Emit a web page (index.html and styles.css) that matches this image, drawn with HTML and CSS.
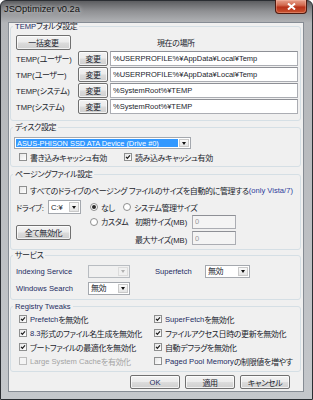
FILE: index.html
```html
<!DOCTYPE html>
<html lang="ja">
  <head>
    <meta charset="utf-8">
    <title>JSOptimizer v0.2a</title>
    <link rel="stylesheet" href="styles.css">
  </head>
  <body>
    <div class="window">
      <div class="titlebar">
        <span class="title">JSOptimizer v0.2a</span>
        <span class="close">
          <svg viewBox="0 0 9 7" width="9" height="7"><path d="M1 0.5 L8 6.5 M8 0.5 L1 6.5"/></svg>
        </span>
      </div>
      <div class="frame">
        <div class="client">

          <fieldset class="group temp">
            <legend><span class="latin">TEMP</span>フォルダ設定</legend>
            <div class="temp-head">
              <button class="btn wide">一括変更</button>
              <span class="now">現在の場所</span>
            </div>
            <div class="temp-row">
              <span class="tlabel"><span class="latin">TEMP(</span>ユーザー<span class="latin">)</span></span>
              <button class="btn small">変更</button>
              <input class="field" value="%USERPROFILE%¥AppData¥Local¥Temp">
            </div>
            <div class="temp-row">
              <span class="tlabel"><span class="latin">TMP(</span>ユーザー<span class="latin">)</span></span>
              <button class="btn small">変更</button>
              <input class="field" value="%USERPROFILE%¥AppData¥Local¥Temp">
            </div>
            <div class="temp-row">
              <span class="tlabel"><span class="latin">TEMP(</span>システム<span class="latin">)</span></span>
              <button class="btn small">変更</button>
              <input class="field" value="%SystemRoot%¥TEMP">
            </div>
            <div class="temp-row">
              <span class="tlabel"><span class="latin">TMP(</span>システム<span class="latin">)</span></span>
              <button class="btn small">変更</button>
              <input class="field" value="%SystemRoot%¥TEMP">
            </div>
          </fieldset>

          <fieldset class="group disk">
            <legend>ディスク設定</legend>
            <div class="combo drive-list">
              <span class="value selected">ASUS-PHISON SSD ATA Device (Drive #0)</span>
              <span class="arrow"></span>
            </div>
            <div class="disk-checks">
              <label class="check first"><span class="cb"></span>書き込みキャッシュ有効</label>
              <label class="check"><span class="cb"><svg viewBox="0 0 7 7"><path d="M1.2 3.3 L2.8 5 L5.8 1.6"/></svg></span>読み込みキャッシュ有効</label>
            </div>
          </fieldset>

          <fieldset class="group paging">
            <legend>ページングファイル設定</legend>
            <label class="check auto"><span class="cb"></span>すべてのドライブのページング ファイルのサイズを自動的に管理する<span class="latin note">(only Vista/7)</span></label>
            <div class="paging-body">
              <div class="paging-left">
                <div class="drive-row">
                  <span class="drive-label">ドライブ:</span>
                  <div class="combo drive-pick">
                    <span class="value latin">C:¥</span>
                    <span class="arrow"></span>
                  </div>
                </div>
                <button class="btn wide off-all">全て無効化</button>
              </div>
              <div class="paging-right">
                <div class="size-row">
                  <label class="radio none"><span class="rb on"></span>なし</label>
                  <label class="radio"><span class="rb"></span>システム管理サイズ</label>
                </div>
                <div class="size-row">
                  <label class="radio custom"><span class="rb"></span>カスタム</label>
                  <span class="size-label">初期サイズ<span class="latin">(MB)</span></span>
                  <input class="field size" value="0" disabled>
                </div>
                <div class="size-row max">
                  <span class="size-label">最大サイズ<span class="latin">(MB)</span></span>
                  <input class="field size" value="0" disabled>
                </div>
              </div>
            </div>
          </fieldset>

          <fieldset class="group services">
            <legend>サービス</legend>
            <div class="svc-grid">
              <span class="latin">Indexing Service</span>
              <div class="combo svc disabled"><span class="value"></span><span class="arrow"></span></div>
              <span class="latin svc-right">Superfetch</span>
              <div class="combo svc"><span class="value">無効</span><span class="arrow"></span></div>
              <span class="latin">Windows Search</span>
              <div class="combo svc"><span class="value">無効</span><span class="arrow"></span></div>
            </div>
          </fieldset>

          <fieldset class="group tweaks">
            <legend class="latin">Registry Tweaks</legend>
            <div class="tweak-grid">
              <label class="check"><span class="cb"><svg viewBox="0 0 7 7"><path d="M1.2 3.3 L2.8 5 L5.8 1.6"/></svg></span><span class="latin">Prefetch</span>を無効化</label>
              <label class="check"><span class="cb"><svg viewBox="0 0 7 7"><path d="M1.2 3.3 L2.8 5 L5.8 1.6"/></svg></span><span class="latin">SuperFetch</span>を無効化</label>
              <label class="check"><span class="cb"><svg viewBox="0 0 7 7"><path d="M1.2 3.3 L2.8 5 L5.8 1.6"/></svg></span><span class="latin">8.3</span>形式のファイル名生成を無効化</label>
              <label class="check"><span class="cb"><svg viewBox="0 0 7 7"><path d="M1.2 3.3 L2.8 5 L5.8 1.6"/></svg></span>ファイルアクセス日時の更新を無効化</label>
              <label class="check"><span class="cb"><svg viewBox="0 0 7 7"><path d="M1.2 3.3 L2.8 5 L5.8 1.6"/></svg></span>ブートファイルの最適化を無効化</label>
              <label class="check"><span class="cb"><svg viewBox="0 0 7 7"><path d="M1.2 3.3 L2.8 5 L5.8 1.6"/></svg></span>自動デフラグを無効化</label>
              <label class="check disabled"><span class="cb"></span><span class="latin">Large System Cache</span>を有効化</label>
              <label class="check"><span class="cb"></span><span class="latin">Paged Pool Memory</span>の制限値を増やす</label>
            </div>
          </fieldset>

          <div class="actions">
            <button class="btn action"><span class="latin">OK</span></button>
            <button class="btn action">適用</button>
            <button class="btn action">キャンセル</button>
          </div>

        </div>
      </div>
    </div>
  </body>
</html>
```

FILE: styles.css
```css
* {
  box-sizing: border-box;
  margin: 0;
  padding: 0;
}
body {
  width: 313px;
  height: 400px;
  overflow: hidden;
  background: #fff;
  font-family: "Liberation Sans", "Noto Sans CJK JP", sans-serif;
  font-size: 8px;
  letter-spacing: -0.4px;
  font-feature-settings: "palt";
  color: #1a1d2c;
}
.latin {
  font-size: 7.6px;
  letter-spacing: 0;
  color: #232c62;
}

/* window chrome */
.window {
  width: 313px;
  height: 400px;
  display: flex;
  flex-direction: column;
  border: 1px solid #2b2e33;
  border-radius: 6px 6px 0 0;
  background: linear-gradient(#5c5d60 0px, #8f9093 10px, #b3b5b8 22px, #c4c7cb 100%);
}
.titlebar {
  height: 21px;
  display: flex;
  justify-content: space-between;
  align-items: flex-start;
  padding-left: 3px;
}
.title {
  line-height: 17px;
  font-size: 9.3px;
  letter-spacing: 0;
  color: #111;
  text-shadow: 0 0 4px rgba(255, 255, 255, 0.8);
}
.close {
  width: 32px;
  height: 14px;
  margin-right: 5px;
  margin-top: -1px;
  display: flex;
  align-items: center;
  justify-content: center;
  border: 1px solid #4d1a10;
  border-top: 0;
  border-radius: 0 0 4px 4px;
  background: linear-gradient(#e7a08c 0%, #d26a4f 40%, #b8321a 55%, #c9532f 100%);
  box-shadow: inset 0 0 0 1px rgba(255, 200, 180, 0.35);
}
.close svg path {
  stroke: #fff;
  stroke-width: 2;
  fill: none;
}
.frame {
  flex: 1;
  padding: 0 8px 7px 7px;
}
.client {
  height: 100%;
  background: #f0f0f0;
  border: 1px solid #868c94;
  padding: 0 2px 0 1px;
}

/* group boxes */
.group {
  border: 1px solid #d5dfe5;
  border-radius: 3px;
  padding: 0 2px 0 5px;
  margin-top: 2px;
  min-width: 0;
}
.group legend {
  line-height: 9px;
  padding: 0 2px;
  margin-left: -3px;
}
.temp {
  margin-top: -1px;
  padding-bottom: 6px;
}

/* controls */
.btn {
  font: inherit;
  letter-spacing: inherit;
  color: inherit;
  height: 15px;
  border: 1px solid #707070;
  border-radius: 2px;
  background: linear-gradient(#f3f3f3 0%, #ebebeb 48%, #dcdcdc 52%, #cfcfcf 100%);
  box-shadow: inset 0 0 0 1px rgba(255, 255, 255, 0.7);
}
.btn.wide {
  width: 55px;
}
.btn.small {
  width: 30px;
}
.field {
  font: inherit;
  font-size: 7.5px;
  letter-spacing: 0;
  color: inherit;
  height: 15px;
  border: 1px solid #abadb3;
  border-top-color: #8e9096;
  background: #fff;
  padding: 0 2px;
}
.field:disabled {
  background: #f4f4f4;
  color: #9a9a9a;
}
.combo {
  display: flex;
  align-items: stretch;
  border: 1px solid #a4a8ae;
  background: #fff;
  padding: 1px;
}
.combo .value {
  flex: 1;
  padding-left: 1px;
  line-height: 10px;
  white-space: nowrap;
  overflow: hidden;
}
.combo .value.selected {
  background: #3399ff;
  color: #fff;
  font-size: 7.4px;
  letter-spacing: 0;
}
.combo .arrow {
  width: 10px;
  margin-left: 1px;
  display: flex;
  align-items: center;
  justify-content: center;
  border: 1px solid #c9c9c9;
  background: linear-gradient(#fafafa, #e4e4e4);
}
.combo .arrow::after {
  content: "";
  border-left: 2.5px solid transparent;
  border-right: 2.5px solid transparent;
  border-top: 3px solid #111;
}
.combo.disabled {
  background: #f0f0f0;
  border-color: #b8bcc1;
}
.combo.disabled .arrow {
  border-color: #dcdcdc;
  background: #f0f0f0;
}
.combo.disabled .arrow::after {
  border-top-color: #b0b0b0;
}
.check,
.radio {
  display: flex;
  align-items: center;
  white-space: nowrap;
}
.cb {
  width: 8px;
  height: 8px;
  margin-right: 3px;
  flex: none;
  border: 1px solid #8e8f8f;
  background: linear-gradient(135deg, #e6e6e6, #fff);
  display: flex;
}
.cb svg {
  width: 6px;
  height: 6px;
}
.cb svg path {
  stroke: #1c1c1c;
  stroke-width: 1.4;
  fill: none;
}
.check.disabled,
.check.disabled .latin {
  color: #a3a3a3;
}
.check.disabled .cb {
  border-color: #bcbcbc;
  background: #f4f4f4;
}
.rb {
  width: 8px;
  height: 8px;
  margin-right: 3px;
  flex: none;
  border: 1px solid #8e8f8f;
  border-radius: 50%;
  background: #fff;
  display: flex;
  align-items: center;
  justify-content: center;
}
.rb.on::after {
  content: "";
  width: 4px;
  height: 4px;
  border-radius: 50%;
  background: #2a2a2a;
}

/* TEMP folder */
.temp-head {
  display: flex;
  align-items: center;
  margin-top: 4px;
}
.now {
  margin-left: 86px;
}
.temp-row {
  display: flex;
  align-items: center;
  margin-top: 1px;
}
.tlabel {
  width: 62px;
  white-space: nowrap;
}
.tlabel .latin {
  color: inherit;
}
.temp-row .field {
  flex: 1;
  margin-left: 2px;
  min-width: 0;
}

/* disk */
.disk {
  padding-bottom: 4px;
}
.drive-list {
  width: 177px;
  height: 12px;
  margin: 5px 0 0 -2px;
}
.disk-checks {
  display: flex;
  height: 10px;
  margin-top: 3px;
  padding-left: 3px;
}
.disk-checks .first {
  width: 105px;
}

/* paging */
.paging {
  margin-top: 3px;
  padding-bottom: 4px;
}
.check.auto {
  height: 10px;
  margin-top: 6px;
  padding-left: 3px;
}
.note {
  color: #2e3d9c;
}
.paging-body {
  display: flex;
  margin-top: 5px;
}
.paging-left {
  width: 72px;
}
.drive-row {
  display: flex;
  align-items: center;
  height: 14px;
}
.drive-label {
  width: 32px;
  white-space: nowrap;
}
.drive-pick {
  width: 33px;
  height: 14px;
}
.drive-pick .value {
  line-height: 11px;
  color: inherit;
}
.off-all {
  margin-top: 11px;
}
.paging-right {
  padding-left: 2px;
}
.size-row {
  display: flex;
  align-items: center;
  height: 15px;
}
.size-row:first-child {
  height: 14px;
}
.radio.none {
  width: 33px;
}
.radio.custom {
  width: 45px;
}
.size-row.max {
  padding-left: 45px;
  height: 16px;
  align-items: flex-end;
}
.size-label {
  width: 57px;
  white-space: nowrap;
}
.size-label .latin {
  color: inherit;
}
.field.size {
  width: 44px;
  height: 14px;
}

/* services */
.services {
  margin-top: 1px;
  padding-bottom: 4px;
}
.svc-grid {
  display: grid;
  grid-template-columns: 72px 42px 75px 45px;
  grid-auto-rows: 13px;
  row-gap: 4px;
  align-items: center;
  margin-top: 5px;
}
.svc-right {
  padding-left: 25px;
}
.combo.svc {
  height: 13px;
}

/* registry tweaks */
.tweaks {
  margin-top: 2px;
  padding-bottom: 3px;
}
.tweak-grid {
  display: grid;
  grid-template-columns: 135px 1fr;
  grid-auto-rows: 14px;
  margin-top: 1px;
}
.tweak-grid .check {
  padding-left: 3px;
}

/* dialog buttons */
.actions {
  display: flex;
  justify-content: flex-end;
  gap: 5px;
  margin: 3px 11px 0 0;
}
.btn.action {
  width: 50px;
  height: 14px;
}
```
